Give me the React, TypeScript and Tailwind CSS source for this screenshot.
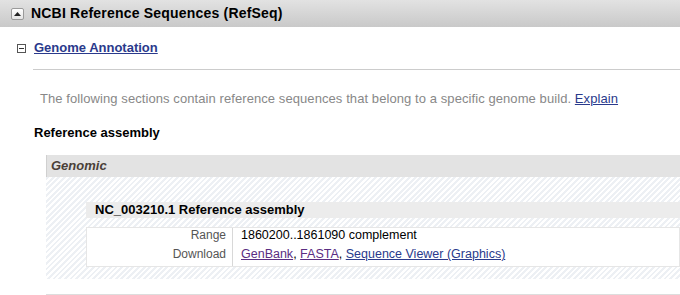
export default function App() {
  return (
    <div className="w-[680px] h-[295px] overflow-hidden bg-white font-['Liberation_Sans',Arial,sans-serif] text-[13px]">
      {/* section header */}
      <div className="h-[27px] flex items-center bg-gradient-to-b from-[#e2e2e2] to-[#c9c9c9]">
        <div className="ml-[11px] w-[13px] h-[12px] rounded-[2px] border border-[#9a9a9a] bg-gradient-to-b from-white to-[#e4e4e4] flex items-center justify-center">
          <svg width="7" height="4" viewBox="0 0 7 4">
            <path d="M0 4 L3.5 0 L7 4 Z" fill="#222" />
          </svg>
        </div>
        <span className="ml-[7px] text-[14px] font-bold text-black tracking-[0.2px]">
          NCBI Reference Sequences (RefSeq)
        </span>
      </div>

      <div className="pl-[17px]">
        <div className="h-[42px] flex items-center">
          <div className="w-[9px] h-[9px] border border-[#555] flex items-center justify-center">
            <div className="w-[5px] h-[1px] bg-[#333]" />
          </div>
          <a className="ml-[8px] text-[13px] font-bold text-[#2a3a8c] underline">Genome Annotation</a>
        </div>
        <div className="ml-[16px] border-t border-[#cccccc]" />
      </div>

      <div className="pl-[40px] h-[56px] pt-[2px] flex items-center text-[#888] text-[13px] tracking-[0.08px]">
        <span>
          The following sections contain reference sequences that belong to a specific genome build.{" "}
          <a className="text-[#2a3a8c] underline">Explain</a>
        </span>
      </div>

      <div className="pl-[34px] text-[13px] font-bold text-black leading-[14px]">Reference assembly</div>

      <div className="ml-[46px] mt-[15px]">
        <div className="h-[22px] bg-[#e3e3e3] border-l border-[#d0d0d0] flex items-center pl-[4px] text-[13px] font-bold italic text-[#4a3f38]">
          Genomic
        </div>
        <div className="h-[102px] pl-[40px] pt-[25px] bg-[repeating-linear-gradient(-45deg,#ffffff_0px,#ffffff_2px,#edf0f4_2px,#edf0f4_4px)]">
          <div className="h-[16px] bg-[#ececec] pl-[9px] flex items-center text-[13px] font-bold text-black">
            NC_003210.1 Reference assembly
          </div>
          <div className="mt-[9px] h-[40px] bg-white border border-[#e6e6e6] flex">
            <div className="w-[146px] border-r border-[#d8d8d8] flex flex-col items-end gap-[5px] pr-[6px] text-[12px] text-[#555]">
              <div className="leading-[14px]">Range</div>
              <div className="leading-[14px]">Download</div>
            </div>
            <div className="pl-[8px] flex flex-col gap-[5px] text-[12.5px] text-black">
              <div className="leading-[14px]">1860200..1861090 complement</div>
              <div className="leading-[14px]">
                <a className="text-[#5a2d82] underline">GenBank</a>,{" "}
                <a className="text-[#5a2d82] underline">FASTA</a>,{" "}
                <a className="text-[#2a3a8c] underline">Sequence Viewer (Graphics)</a>
              </div>
            </div>
          </div>
        </div>
        <div className="mt-[15px] border-t border-[#dddddd]" />
      </div>
    </div>
  );
}
